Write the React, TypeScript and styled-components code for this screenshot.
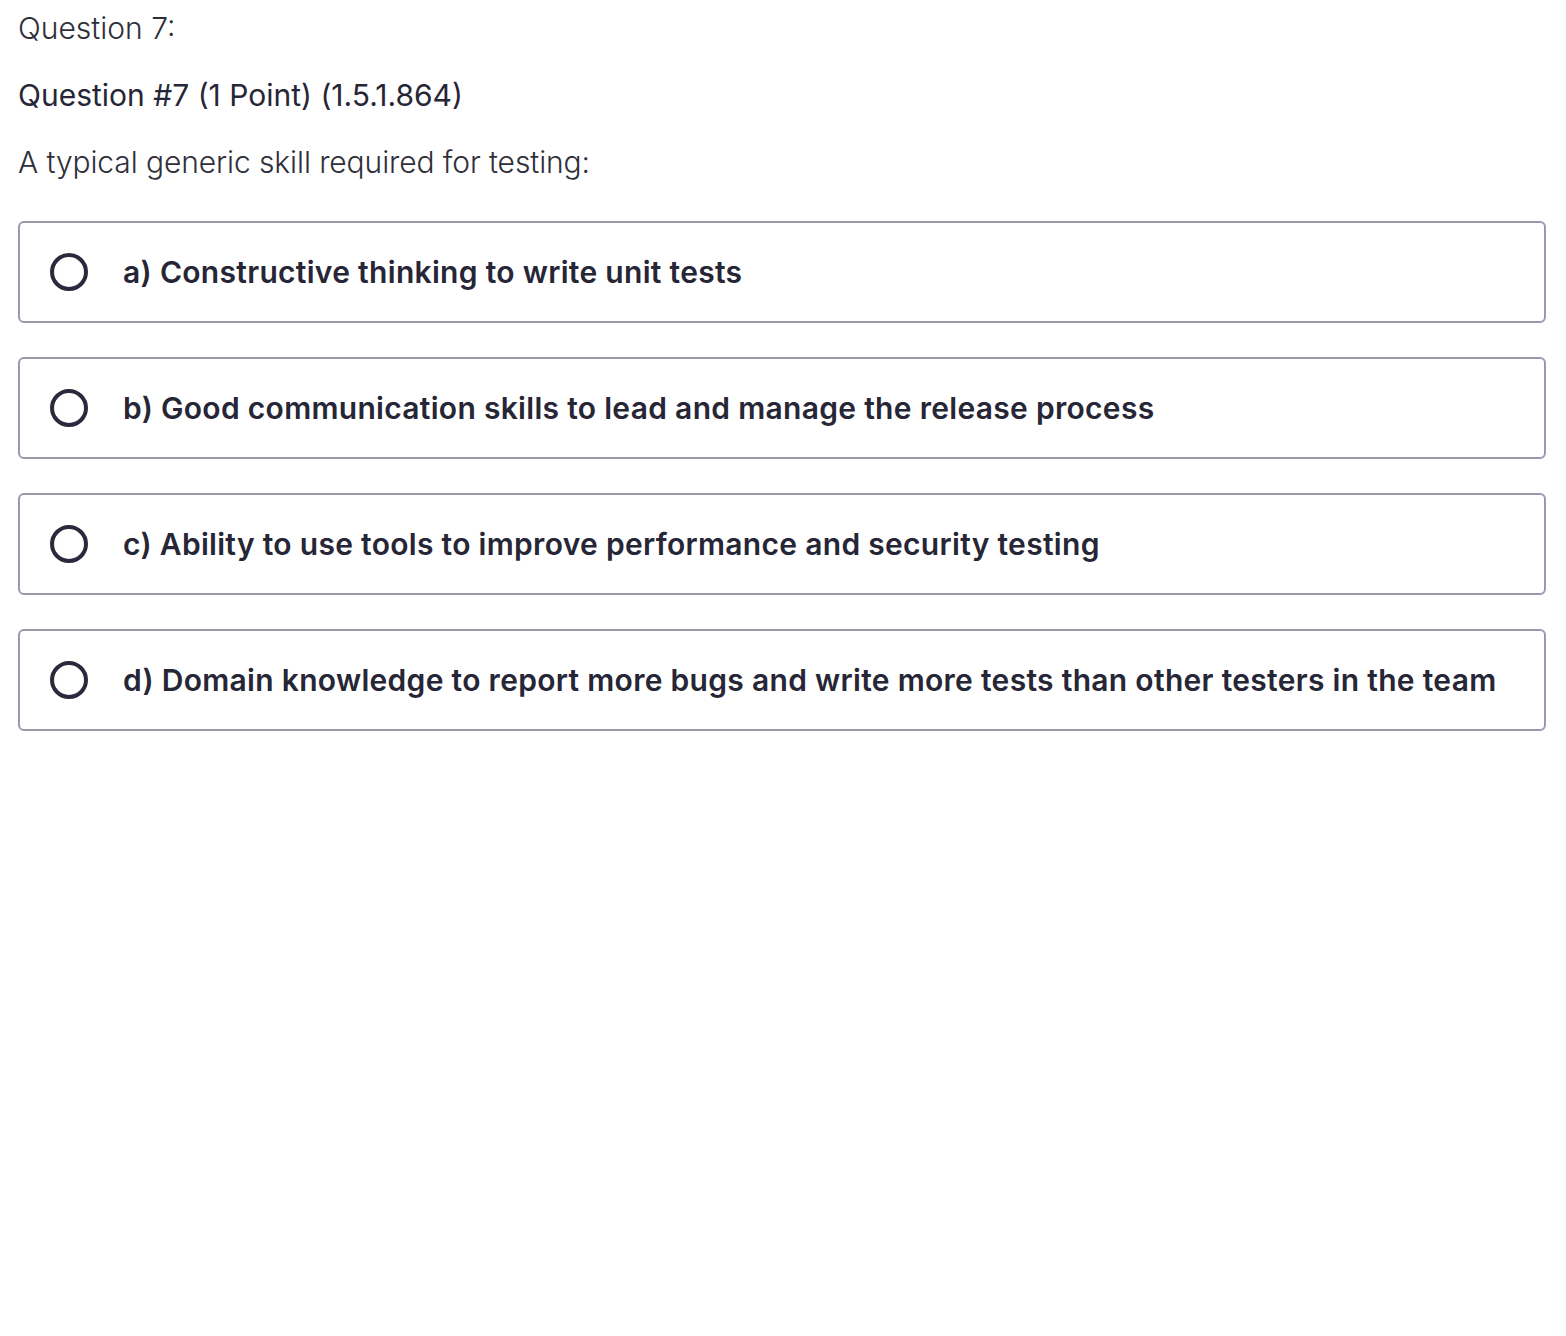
import React from 'react'
import styled, { createGlobalStyle } from 'styled-components'

const GlobalStyle = createGlobalStyle`
  html, body {
    margin: 0;
    padding: 0;
    background: #ffffff;
  }
  body {
    font-family: Inter, "Noto Sans", sans-serif;
    color: #2a2a3c;
  }
`

const options = [
  'a) Constructive thinking to write unit tests',
  'b) Good communication skills to lead and manage the release process',
  'c) Ability to use tools to improve performance and security testing',
  'd) Domain knowledge to report more bugs and write more tests than other testers in the team',
]

export default function App() {
  return (
    <>
      <GlobalStyle />
      <Page>
        <QuestionLabel>Question 7:</QuestionLabel>
        <QuestionMeta>Question #7 (1 Point) (1.5.1.864)</QuestionMeta>
        <Prompt>A typical generic skill required for testing:</Prompt>
        <OptionList>
          {options.map((text) => (
            <Option key={text}>
              <Radio />
              <OptionText>{text}</OptionText>
            </Option>
          ))}
        </OptionList>
      </Page>
    </>
  )
}

const Page = styled.div`
  padding: 8px 20px 0 18px;
`

const QuestionLabel = styled.div`
  font-size: 30px;
  line-height: 40px;
  font-weight: 300;
  color: #2f2f3a;
`

const QuestionMeta = styled.div`
  margin-top: 27px;
  font-size: 30px;
  line-height: 40px;
  font-weight: 400;
  color: #262636;
`

const Prompt = styled.div`
  margin-top: 27px;
  font-size: 30px;
  line-height: 40px;
  font-weight: 300;
  color: #2f2f3a;
  letter-spacing: -0.1px;
`

const OptionList = styled.div`
  margin-top: 39px;
  display: flex;
  flex-direction: column;
  gap: 34px;
`

const Option = styled.label`
  display: flex;
  align-items: center;
  height: 98px;
  padding: 0 30px;
  border: 2px solid #9a9aad;
  border-radius: 6px;
  cursor: pointer;
`

const Radio = styled.span`
  flex: none;
  box-sizing: border-box;
  width: 38px;
  height: 38px;
  border: 4px solid #2a2a3c;
  border-radius: 50%;
`

const OptionText = styled.span`
  margin-left: 35px;
  font-size: 30px;
  font-weight: 600;
  letter-spacing: 0.3px;
  color: #262636;
`
